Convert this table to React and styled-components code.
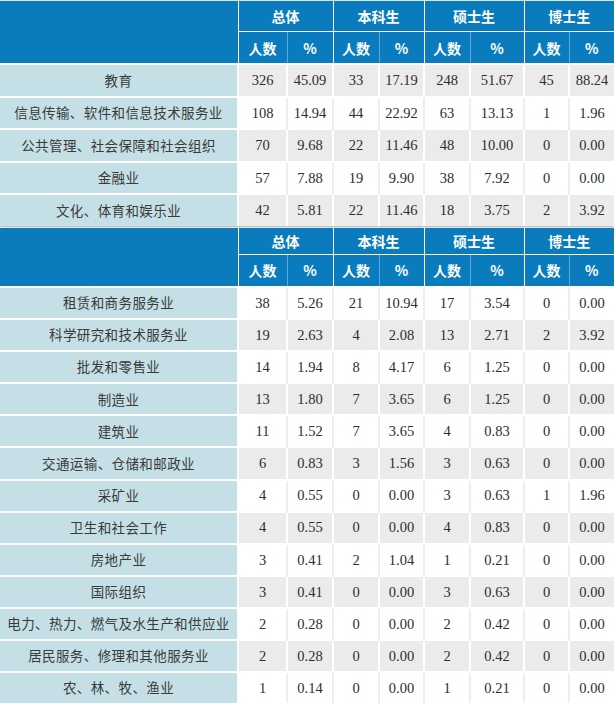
import React from "react";
import styled, { createGlobalStyle } from "styled-components";

const GlobalStyle = createGlobalStyle`
  html, body {
    margin: 0;
    padding: 0;
    background: #ffffff;
  }
`;

const widths = [238, 49, 46, 46, 45, 46, 54, 45, 45];
const groups = ["总体", "本科生", "硕士生", "博士生"];

const tableOne = [
  ["教育", "326", "45.09", "33", "17.19", "248", "51.67", "45", "88.24"],
  ["信息传输、软件和信息技术服务业", "108", "14.94", "44", "22.92", "63", "13.13", "1", "1.96"],
  ["公共管理、社会保障和社会组织", "70", "9.68", "22", "11.46", "48", "10.00", "0", "0.00"],
  ["金融业", "57", "7.88", "19", "9.90", "38", "7.92", "0", "0.00"],
  ["文化、体育和娱乐业", "42", "5.81", "22", "11.46", "18", "3.75", "2", "3.92"],
];

const tableTwo = [
  ["租赁和商务服务业", "38", "5.26", "21", "10.94", "17", "3.54", "0", "0.00"],
  ["科学研究和技术服务业", "19", "2.63", "4", "2.08", "13", "2.71", "2", "3.92"],
  ["批发和零售业", "14", "1.94", "8", "4.17", "6", "1.25", "0", "0.00"],
  ["制造业", "13", "1.80", "7", "3.65", "6", "1.25", "0", "0.00"],
  ["建筑业", "11", "1.52", "7", "3.65", "4", "0.83", "0", "0.00"],
  ["交通运输、仓储和邮政业", "6", "0.83", "3", "1.56", "3", "0.63", "0", "0.00"],
  ["采矿业", "4", "0.55", "0", "0.00", "3", "0.63", "1", "1.96"],
  ["卫生和社会工作", "4", "0.55", "0", "0.00", "4", "0.83", "0", "0.00"],
  ["房地产业", "3", "0.41", "2", "1.04", "1", "0.21", "0", "0.00"],
  ["国际组织", "3", "0.41", "0", "0.00", "3", "0.63", "0", "0.00"],
  ["电力、热力、燃气及水生产和供应业", "2", "0.28", "0", "0.00", "2", "0.42", "0", "0.00"],
  ["居民服务、修理和其他服务业", "2", "0.28", "0", "0.00", "2", "0.42", "0", "0.00"],
  ["农、林、牧、渔业", "1", "0.14", "0", "0.00", "1", "0.21", "0", "0.00"],
];

function StatsTable({ rows, firstHeight, secondHeight, rowHeight, grayFirst, top }) {
  return (
    <Table $top={top}>
      <colgroup>
        {widths.map((w, i) => (
          <col key={i} style={{ width: w }} />
        ))}
      </colgroup>
      <thead>
        <tr>
          <Corner rowSpan={2} />
          {groups.map((g) => (
            <GroupCell key={g} colSpan={2} $h={firstHeight}>
              {g}
            </GroupCell>
          ))}
        </tr>
        <tr>
          {groups.map((g) => (
            <React.Fragment key={g}>
              <SubCell $h={secondHeight}>人数</SubCell>
              <SubCell $h={secondHeight} $inner>
                %
              </SubCell>
            </React.Fragment>
          ))}
        </tr>
      </thead>
      <tbody>
        {rows.map((row, r) => {
          const gray = grayFirst ? r % 2 === 0 : r % 2 === 1;
          return (
            <tr key={row[0]}>
              <LabelCell $h={rowHeight}>{row[0]}</LabelCell>
              {row.slice(1).map((v, i) => (
                <ValueCell key={i} $h={rowHeight} $gray={gray}>
                  {v}
                </ValueCell>
              ))}
            </tr>
          );
        })}
      </tbody>
    </Table>
  );
}

export default function App() {
  return (
    <>
      <GlobalStyle />
      <Page>
        <StatsTable
          rows={tableOne}
          firstHeight={31}
          secondHeight={31}
          rowHeight={32.6}
          grayFirst
          top
        />
        <StatsTable
          rows={tableTwo}
          firstHeight={27}
          secondHeight={31}
          rowHeight={32.1}
          grayFirst={false}
        />
      </Page>
    </>
  );
}

const Page = styled.div`
  width: 614px;
  height: 704px;
  overflow: hidden;
  display: flex;
  flex-direction: column;
  gap: 2px;
`;

const Table = styled.table`
  width: 614px;
  table-layout: fixed;
  border-collapse: collapse;
  border-top: ${(p) => (p.$top ? "1px solid #d6e6ee" : "none")};
  box-shadow: ${(p) => (p.$top ? "0 1px 2px rgba(60, 60, 60, 0.45)" : "none")};
  position: relative;
`;

const Corner = styled.th`
  background: #0a7cbd;
  border-right: 1px solid #ffffff;
  padding: 0;
`;

const GroupCell = styled.th`
  height: ${(p) => p.$h - 1}px;
  padding: 0;
  background: #0a7cbd;
  color: #ffffff;
  border: 1px solid #ffffff;
  border-top: none;
  font-family: "Noto Sans CJK SC", "Noto Sans", sans-serif;
  font-size: 14px;
  font-weight: 700;
  line-height: 1;
  text-align: center;
  &:last-child {
    border-right: none;
  }
`;

const SubCell = styled.th`
  height: ${(p) => p.$h}px;
  padding: 0;
  background: #0a7cbd;
  color: #ffffff;
  border-left: 1px solid ${(p) => (p.$inner ? "#5ba7d6" : "#ffffff")};
  border-bottom: none;
  font-family: "Noto Sans CJK SC", "Noto Sans", sans-serif;
  font-size: 14px;
  font-weight: 700;
  line-height: 1;
  text-align: center;
`;

const LabelCell = styled.td`
  height: ${(p) => p.$h - 2}px;
  padding: 0;
  background: #c4e0e6;
  color: #3a3a3a;
  border-top: 2px solid #ffffff;
  border-right: 2px solid #ffffff;
  font-family: "Noto Sans CJK SC", sans-serif;
  font-size: 13.5px;
  line-height: 1;
  letter-spacing: 0.4px;
  text-align: center;
  white-space: nowrap;
`;

const ValueCell = styled.td`
  height: ${(p) => p.$h - 2}px;
  padding: 0;
  background: ${(p) => (p.$gray ? "#ebebeb" : "#ffffff")};
  color: #2e2e2e;
  border-top: 2px solid #ffffff;
  border-left: 2px solid ${(p) => (p.$gray ? "#ffffff" : "#eeeeee")};
  font-family: "Liberation Serif", "Times New Roman", serif;
  font-size: 14.5px;
  line-height: 1;
  text-align: center;
  white-space: nowrap;
`;
